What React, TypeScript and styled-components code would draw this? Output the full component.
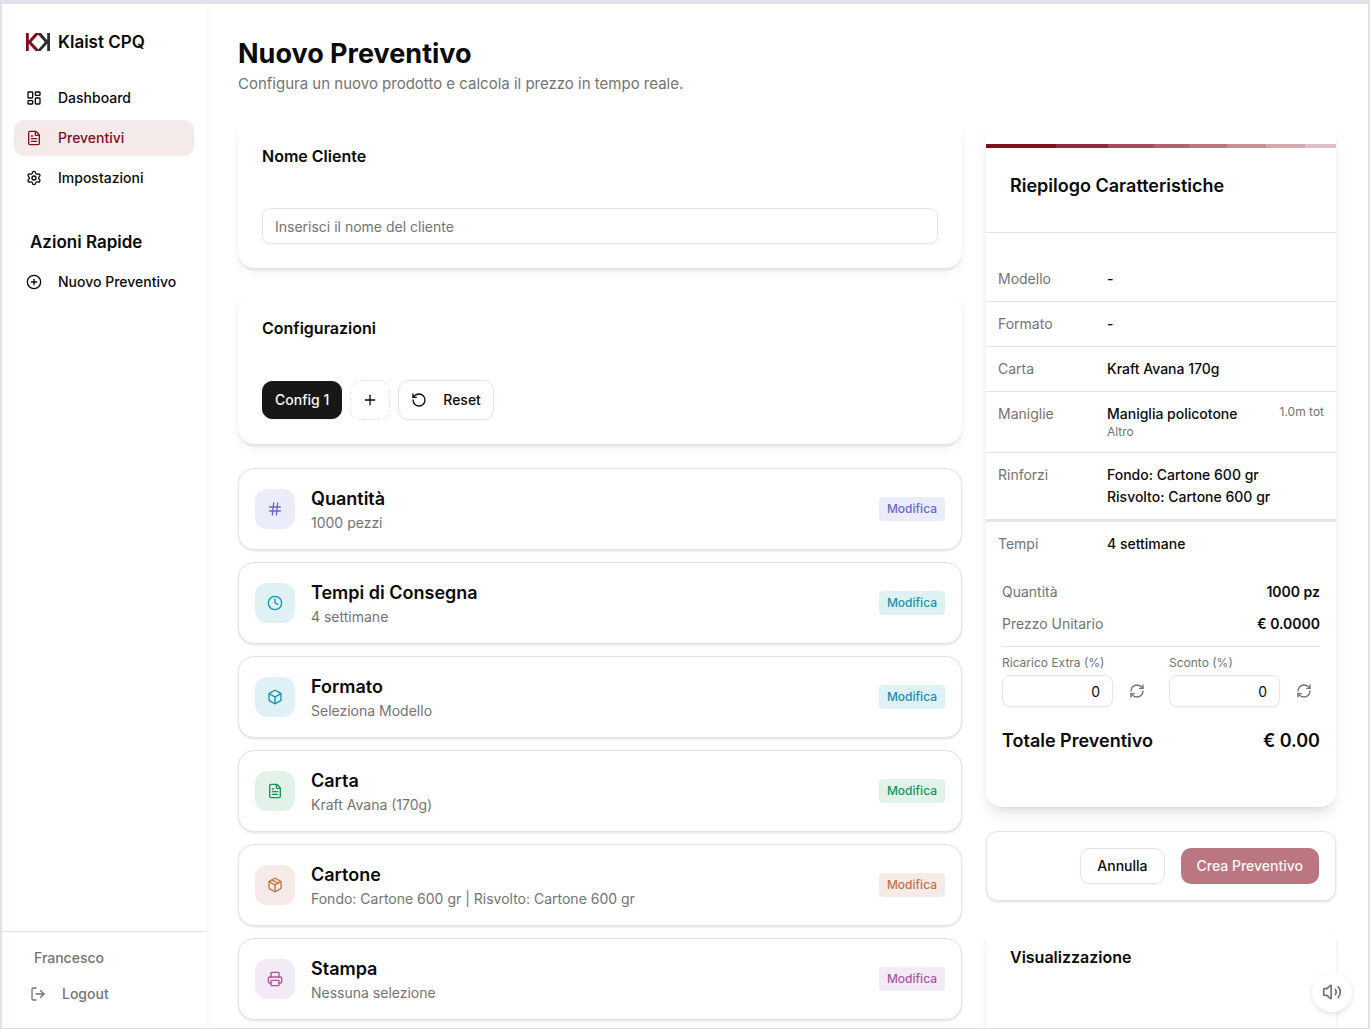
import React from "react";
import styled, { createGlobalStyle } from "styled-components";
import {
  Box,
  CirclePlus,
  Clock,
  FileText,
  Hash,
  LayoutDashboard,
  LogOut,
  Package,
  Plus,
  Printer,
  RefreshCw,
  RotateCcw,
  Settings,
  Volume2,
  type LucideIcon,
} from "lucide-react";

const INK = "#0a0a0a";
const MUTED = "#737373";
const LINE = "#e5e5e5";
const BRAND = "#800f1e";

const GlobalStyle = createGlobalStyle`
  *, *::before, *::after { box-sizing: border-box; }
  body {
    margin: 0;
    font-family: Inter, "Liberation Sans", sans-serif;
    font-size: 14px;
    line-height: 20px;
    color: ${INK};
    background: #fff;
    -webkit-font-smoothing: antialiased;
  }
  h1, h2, h3, p { margin: 0; }
  button, input { font: inherit; color: inherit; }
  button { cursor: pointer; }
`;

const Shell = styled.div`
  display: flex;
  height: 100vh;
  overflow: hidden;
  border: solid #dfe2ed;
  border-width: 4px 2px 1px;
`;

const Sidebar = styled.aside`
  display: flex;
  flex-direction: column;
  flex: 0 0 204px;
  background: #fff;
  box-shadow: 2px 0 6px rgba(0, 0, 0, 0.04);
`;

const Brand = styled.div`
  display: flex;
  align-items: center;
  gap: 8px;
  padding: 24px;
`;

const BrandName = styled.span`
  font-size: 17px;
  line-height: 28px;
  font-weight: 600;
`;

const Nav = styled.nav`
  display: flex;
  flex-direction: column;
  gap: 4px;
  padding: 0 12px;
`;

const NavLink = styled.a<{ $active?: boolean }>`
  display: flex;
  align-items: center;
  gap: 16px;
  height: 36px;
  padding: 0 12px;
  border-radius: 10px;
  font-weight: 500;
  text-decoration: none;
  color: ${(p) => (p.$active ? BRAND : INK)};
  background: ${(p) => (p.$active ? "#f5eaea" : "transparent")};
`;

const QuickTitle = styled.h2`
  padding: 32px 28px 8px;
  font-size: 17px;
  line-height: 28px;
  font-weight: 600;
`;

const SidebarFooter = styled.div`
  display: flex;
  flex-direction: column;
  gap: 8px;
  margin-top: auto;
  padding: 16px;
  border-top: 1px solid ${LINE};
  font-weight: 500;
  color: ${MUTED};
`;

const UserName = styled.span`
  padding: 0 16px;
`;

const LogoutButton = styled.button`
  display: flex;
  align-items: center;
  gap: 16px;
  height: 36px;
  padding: 0 12px;
  border: 0;
  background: none;
`;

const Main = styled.main`
  flex: 1;
  min-width: 0;
  padding: 32px;
  overflow-y: auto;
  scrollbar-width: none;
`;

const PageTitle = styled.h1`
  font-size: 27px;
  line-height: 36px;
  font-weight: 700;
`;

const PageLead = styled.p`
  font-size: 15px;
  line-height: 24px;
  color: ${MUTED};
`;

const Columns = styled.div`
  display: grid;
  grid-template-columns: minmax(0, 1fr) 350px;
  gap: 24px;
  align-items: start;
  margin-top: 24px;
`;

const Stack = styled.div<{ $gap: number }>`
  display: flex;
  flex-direction: column;
  gap: ${(p) => p.$gap}px;
`;

const Card = styled.section`
  padding: 24px;
  border-radius: 16px;
  background: #fff;
  box-shadow: 0 4px 6px -1px rgba(0, 0, 0, 0.1), 0 2px 4px -2px rgba(0, 0, 0, 0.1);
`;

const CardTitle = styled.h2`
  margin-bottom: 40px;
  font-size: 16px;
  line-height: 24px;
  font-weight: 600;
`;

const PreviewCard = styled(Card)`
  min-height: 320px;
`;

const PreviewTitle = styled(CardTitle)`
  line-height: 16px;
`;

const TextInput = styled.input`
  display: block;
  width: 100%;
  height: 36px;
  padding: 0 12px;
  border: 1px solid ${LINE};
  border-radius: 8px;
  background: #fff;
  box-shadow: 0 1px 2px rgba(0, 0, 0, 0.05);
  &::placeholder {
    color: ${MUTED};
    opacity: 1;
  }
`;

const ButtonRow = styled.div`
  display: flex;
  align-items: center;
  gap: 8px;
`;

const Button = styled.button`
  display: inline-flex;
  align-items: center;
  justify-content: center;
  height: 36px;
  padding: 0 16px;
  border: 1px solid ${LINE};
  border-radius: 10px;
  background: #fff;
  font-weight: 500;
  white-space: nowrap;
  box-shadow: 0 1px 2px rgba(0, 0, 0, 0.05);
`;

const ConfigTab = styled(Button)`
  height: 38px;
  padding: 0 12px;
  border-color: #171717;
  background: #171717;
  color: #fafafa;
`;

const AddButton = styled(Button)`
  width: 40px;
  height: 40px;
  padding: 0;
  border-style: dashed;
  box-shadow: none;
`;

const ResetButton = styled(Button)`
  gap: 16px;
  height: 40px;
  padding: 0 12px;
`;

const PrimaryButton = styled(Button)`
  border: 0;
  background: #ba7681;
  color: #fdf7f7;
  box-shadow: none;
`;

const OptionCard = styled.article`
  display: flex;
  align-items: center;
  gap: 16px;
  padding: 16px;
  border: 1px solid ${LINE};
  border-radius: 16px;
  background: #fff;
  box-shadow: 0 1px 3px rgba(0, 0, 0, 0.1), 0 1px 2px -1px rgba(0, 0, 0, 0.1);
`;

const OptionIcon = styled.span<{ $tone: string; $tint: string }>`
  display: grid;
  place-items: center;
  width: 40px;
  height: 40px;
  border-radius: 12px;
  color: ${(p) => p.$tone};
  background: ${(p) => p.$tint};
`;

const OptionBody = styled.div`
  flex: 1;
  min-width: 0;
`;

const OptionTitle = styled.h3`
  font-size: 18px;
  line-height: 28px;
  font-weight: 600;
`;

const OptionText = styled.p`
  color: ${MUTED};
`;

const EditButton = styled.button<{ $tone: string; $tint: string }>`
  height: 24px;
  padding: 0 8px;
  border: 0;
  border-radius: 4px;
  font-size: 12px;
  line-height: 16px;
  font-weight: 500;
  color: ${(p) => p.$tone};
  background: ${(p) => p.$tint};
`;

const SummaryCard = styled.section`
  padding: 24px 0 52px;
  border-radius: 16px;
  background: #fff;
  box-shadow: 0 10px 15px -3px rgba(0, 0, 0, 0.1), 0 4px 6px -4px rgba(0, 0, 0, 0.1);
`;

const AccentBar = styled.div`
  height: 4px;
  background: linear-gradient(
    to right,
    #800f1a 0 20%,
    #93283c 20% 35%,
    #a84a5a 35% 48%,
    #b4606d 48% 58%,
    #bd7680 58% 69%,
    #c99197 69% 80%,
    #d3a8ae 80% 91%,
    #dfbfc5 91%
  );
`;

const SummaryTitle = styled.h2`
  padding: 24px 24px 32px;
  border-bottom: 1px solid ${LINE};
  font-size: 18px;
  line-height: 28px;
  font-weight: 600;
`;

const SummaryTable = styled.table`
  width: 100%;
  margin-top: 24px;
  border-collapse: separate;
  border-spacing: 0;
`;

const SummaryRow = styled.tr<{ $line?: number }>`
  & > * {
    padding: 12px;
    text-align: left;
    vertical-align: top;
    border-bottom: ${(p) => p.$line ?? 1}px solid ${LINE};
  }
`;

const RowLabel = styled.th`
  width: 109px;
  font-weight: 400;
  color: ${MUTED};
`;

const RowValue = styled.td`
  font-weight: 500;
`;

const ValueSplit = styled.div`
  display: flex;
  justify-content: space-between;
  align-items: flex-start;
`;

const Note = styled.div`
  font-size: 12px;
  line-height: 16px;
  font-weight: 400;
  color: ${MUTED};
`;

const Totals = styled.div`
  display: flex;
  flex-direction: column;
  gap: 12px;
  padding: 16px 16px 0;
`;

const TotalLine = styled.div`
  display: flex;
  justify-content: space-between;
  color: ${MUTED};
`;

const Strong = styled.span`
  font-weight: 600;
  color: ${INK};
`;

const Adjustments = styled.div`
  display: grid;
  grid-template-columns: 1fr 1fr;
  gap: 16px;
  padding-top: 8px;
  border-top: 1px solid ${LINE};
`;

const FieldLabel = styled.label`
  display: block;
  margin-bottom: 4px;
  font-size: 12px;
  line-height: 16px;
  color: ${MUTED};
`;

const FieldRow = styled.div`
  display: flex;
  gap: 8px;
`;

const AmountInput = styled(TextInput)`
  flex: 1;
  min-width: 0;
  height: 32px;
  text-align: right;
`;

const IconButton = styled.button`
  display: grid;
  place-items: center;
  width: 32px;
  height: 32px;
  padding: 0;
  border: 0;
  background: none;
  color: ${MUTED};
`;

const GrandTotal = styled.div`
  display: flex;
  justify-content: space-between;
  padding-top: 8px;
  font-size: 18px;
  line-height: 28px;
  font-weight: 600;
`;

const ActionsCard = styled.div`
  display: flex;
  justify-content: flex-end;
  gap: 16px;
  padding: 16px;
  border: 1px solid ${LINE};
  border-radius: 12px;
  background: #fff;
  box-shadow: 0 1px 3px rgba(0, 0, 0, 0.1), 0 1px 2px -1px rgba(0, 0, 0, 0.1);
`;

const SoundButton = styled.button`
  position: fixed;
  right: 18px;
  bottom: 17px;
  display: grid;
  place-items: center;
  width: 40px;
  height: 40px;
  padding: 0;
  border: 0;
  border-radius: 50%;
  background: #fff;
  color: ${MUTED};
  box-shadow: 0 2px 5px rgba(0, 0, 0, 0.12);
`;

const Logo = () => (
  <svg width="24" height="18" viewBox="0 0 24 18" aria-hidden="true">
    <path d="M0 0h2.8v7.6L9.4 0h4L12 1.8 5.4 9l6.8 7.2L13.6 18H9.6L2.8 10.6V18H0z" fill="#800f1e" />
    <path d="M24 0h-2.8v7.2L15 0h-2L12 1.4 18.8 9 11 18h3.6l6.6-7.2V18H24z" fill="#2e2e2e" />
  </svg>
);

type Option = {
  title: string;
  text: string;
  icon: LucideIcon;
  tone: string;
  tint: string;
};

const options: Option[] = [
  { title: "Quantità", text: "1000 pezzi", icon: Hash, tone: "#6a66cc", tint: "#ebecf9" },
  { title: "Tempi di Consegna", text: "4 settimane", icon: Clock, tone: "#1494ab", tint: "#e0f1f4" },
  { title: "Formato", text: "Seleziona Modello", icon: Box, tone: "#118fb0", tint: "#e0f0f7" },
  { title: "Carta", text: "Kraft Avana (170g)", icon: FileText, tone: "#12965c", tint: "#e3f2e9" },
  {
    title: "Cartone",
    text: "Fondo: Cartone 600 gr | Risvolto: Cartone 600 gr",
    icon: Package,
    tone: "#c2733f",
    tint: "#f6eae8",
  },
  { title: "Stampa", text: "Nessuna selezione", icon: Printer, tone: "#a855a0", tint: "#f2eaf5" },
];

const Adjustment = ({ id, label }: { id: string; label: string }) => (
  <div>
    <FieldLabel htmlFor={id}>{label}</FieldLabel>
    <FieldRow>
      <AmountInput id={id} inputMode="decimal" defaultValue="0" />
      <IconButton type="button" aria-label={`Ricalcola ${label}`}>
        <RefreshCw size={16} />
      </IconButton>
    </FieldRow>
  </div>
);

export default function App() {
  return (
    <>
      <GlobalStyle />
      <Shell>
        <Sidebar>
          <Brand>
            <Logo />
            <BrandName>Klaist CPQ</BrandName>
          </Brand>
          <Nav>
            <NavLink href="#dashboard">
              <LayoutDashboard size={16} />
              Dashboard
            </NavLink>
            <NavLink href="#preventivi" $active>
              <FileText size={16} />
              Preventivi
            </NavLink>
            <NavLink href="#impostazioni">
              <Settings size={16} />
              Impostazioni
            </NavLink>
          </Nav>
          <QuickTitle>Azioni Rapide</QuickTitle>
          <Nav>
            <NavLink href="#nuovo">
              <CirclePlus size={16} />
              Nuovo Preventivo
            </NavLink>
          </Nav>
          <SidebarFooter>
            <UserName>Francesco</UserName>
            <LogoutButton type="button">
              <LogOut size={16} />
              Logout
            </LogoutButton>
          </SidebarFooter>
        </Sidebar>

        <Main>
          <PageTitle>Nuovo Preventivo</PageTitle>
          <PageLead>Configura un nuovo prodotto e calcola il prezzo in tempo reale.</PageLead>

          <Columns>
            <Stack $gap={24}>
              <Card>
                <CardTitle>
                  <label htmlFor="cliente">Nome Cliente</label>
                </CardTitle>
                <TextInput id="cliente" placeholder="Inserisci il nome del cliente" />
              </Card>

              <Card>
                <CardTitle>Configurazioni</CardTitle>
                <ButtonRow>
                  <ConfigTab type="button">Config 1</ConfigTab>
                  <AddButton type="button" aria-label="Aggiungi configurazione">
                    <Plus size={16} />
                  </AddButton>
                  <ResetButton type="button">
                    <RotateCcw size={16} />
                    Reset
                  </ResetButton>
                </ButtonRow>
              </Card>

              <Stack $gap={12}>
                {options.map(({ title, text, icon: Icon, tone, tint }) => (
                  <OptionCard key={title}>
                    <OptionIcon $tone={tone} $tint={tint}>
                      <Icon size={16} />
                    </OptionIcon>
                    <OptionBody>
                      <OptionTitle>{title}</OptionTitle>
                      <OptionText>{text}</OptionText>
                    </OptionBody>
                    <EditButton type="button" $tone={tone} $tint={tint}>
                      Modifica
                    </EditButton>
                  </OptionCard>
                ))}
              </Stack>
            </Stack>

            <Stack $gap={24}>
              <SummaryCard>
                <AccentBar />
                <SummaryTitle>Riepilogo Caratteristiche</SummaryTitle>
                <SummaryTable>
                  <tbody>
                    <SummaryRow>
                      <RowLabel scope="row">Modello</RowLabel>
                      <RowValue>-</RowValue>
                    </SummaryRow>
                    <SummaryRow>
                      <RowLabel scope="row">Formato</RowLabel>
                      <RowValue>-</RowValue>
                    </SummaryRow>
                    <SummaryRow>
                      <RowLabel scope="row">Carta</RowLabel>
                      <RowValue>Kraft Avana 170g</RowValue>
                    </SummaryRow>
                    <SummaryRow>
                      <RowLabel scope="row">Maniglie</RowLabel>
                      <RowValue>
                        <ValueSplit>
                          <div>
                            Maniglia policotone
                            <Note>Altro</Note>
                          </div>
                          <Note>1.0m tot</Note>
                        </ValueSplit>
                      </RowValue>
                    </SummaryRow>
                    <SummaryRow $line={3}>
                      <RowLabel scope="row">Rinforzi</RowLabel>
                      <RowValue>
                        <Stack $gap={2}>
                          <span>Fondo: Cartone 600 gr</span>
                          <span>Risvolto: Cartone 600 gr</span>
                        </Stack>
                      </RowValue>
                    </SummaryRow>
                    <SummaryRow $line={0}>
                      <RowLabel scope="row">Tempi</RowLabel>
                      <RowValue>4 settimane</RowValue>
                    </SummaryRow>
                  </tbody>
                </SummaryTable>
                <Totals>
                  <TotalLine>
                    Quantità <Strong>1000 pz</Strong>
                  </TotalLine>
                  <TotalLine>
                    Prezzo Unitario <Strong>€ 0.0000</Strong>
                  </TotalLine>
                  <Adjustments>
                    <Adjustment id="ricarico" label="Ricarico Extra (%)" />
                    <Adjustment id="sconto" label="Sconto (%)" />
                  </Adjustments>
                  <GrandTotal>
                    <span>Totale Preventivo</span>
                    <span>€ 0.00</span>
                  </GrandTotal>
                </Totals>
              </SummaryCard>

              <ActionsCard>
                <Button type="button">Annulla</Button>
                <PrimaryButton type="button">Crea Preventivo</PrimaryButton>
              </ActionsCard>

              <PreviewCard>
                <PreviewTitle>Visualizzazione</PreviewTitle>
              </PreviewCard>
            </Stack>
          </Columns>
        </Main>
      </Shell>
      <SoundButton type="button" aria-label="Audio">
        <Volume2 size={20} />
      </SoundButton>
    </>
  );
}
